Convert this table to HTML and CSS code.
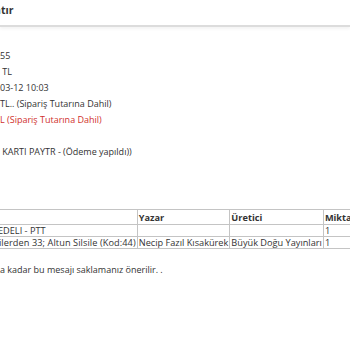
FILE: index.html
```html
<!DOCTYPE html>
<html lang="tr">
<head>
<meta charset="utf-8">
<title>Sipariş</title>
<link rel="stylesheet" href="styles.css">
</head>
<body>
<header class="topbar">
  <div class="title"><span class="title-text">Siparişi Yazdır / Aktar Satır</span></div>
</header>
<main class="content">
  <div class="info">
    <div class="line"><span class="pre">Sipariş No: 7812</span>55</div>
    <div class="line"><span class="pre">Toplam: 48,00</span> TL</div>
    <div class="line"><span class="pre">Tarih: 2024-</span>03-12 10:03</div>
    <div class="line"><span class="pre">Kargo: 10,00 </span>TL.. (Sipariş Tutarına Dahil)</div>
    <div class="line red"><span class="pre">KDV: 4,36 T</span>L (Sipariş Tutarına Dahil)</div>
    <div class="line empty">&nbsp;</div>
    <div class="line"><span class="pre">Ödeme: KREDİ</span> KARTI PAYTR - (Ödeme yapıldı))</div>
  </div>
  <table class="items">
    <tr>
      <th class="c1">Ürün</th>
      <th class="c2">Yazar</th>
      <th class="c3">Üretici</th>
      <th class="c4">Miktar</th>
    </tr>
    <tr>
      <td class="c1">TÜMÜ SİPARİŞ KARGO BEDELI - PTT</td>
      <td class="c2"></td>
      <td class="c3"></td>
      <td class="c4">1</td>
    </tr>
    <tr>
      <td class="c1 long">Esselamü Aleyküm - Seçilerden 33; Altun Silsile (Kod:44)</td>
      <td class="c2">Necip Fazıl Kısakürek</td>
      <td class="c3">Büyük Doğu Yayınları</td>
      <td class="c4">1</td>
    </tr>
  </table>
  <p class="note"><span class="pre">Siparişiniz size ulaşan</span>a kadar bu mesajı saklamanız önerilir. .</p>
</main>
</body>
</html>
```
FILE: styles.css
```css
html, body {
  margin: 0;
  padding: 0;
  background: #fff;
  overflow: hidden;
}
body {
  font-family: "Open Sans", "Noto Sans", sans-serif;
  font-size: 9px;
  color: #333;
  width: 350px;
  height: 350px;
}
.topbar {
  height: 25px;
  border-bottom: 2px solid #dcdcdc;
  box-shadow: 0 2px 3px rgba(0, 0, 0, 0.05);
}
.title {
  display: flex;
  justify-content: flex-end;
  width: 13.5px;
  font-size: 10.5px;
  font-weight: bold;
  color: #333;
  line-height: 20px;
  white-space: nowrap;
}
.title-text {
  flex: none;
}
.content {
  margin-top: 21px;
}
.info {
  white-space: nowrap;
}
.line {
  line-height: 16px;
  height: 16px;
}
.pre {
  display: inline-block;
  width: 0;
  overflow: hidden;
  visibility: hidden;
  vertical-align: top;
}
.red {
  color: #d0312d;
}
.items {
  border-collapse: collapse;
  margin-top: 49px;
  margin-left: -107px;
  white-space: nowrap;
  font-size: 9.2px;
}
.items th,
.items td {
  border: 1px solid #c4c4c4;
  padding: 0 1px;
  text-align: left;
  height: 11px;
  line-height: 11px;
}
.items th {
  font-weight: bold;
  height: 14px;
}
.items .long {
  letter-spacing: 0.08px;
}
.note {
  margin: 15px 0 0 0;
  white-space: nowrap;
  line-height: 12px;
}
```
